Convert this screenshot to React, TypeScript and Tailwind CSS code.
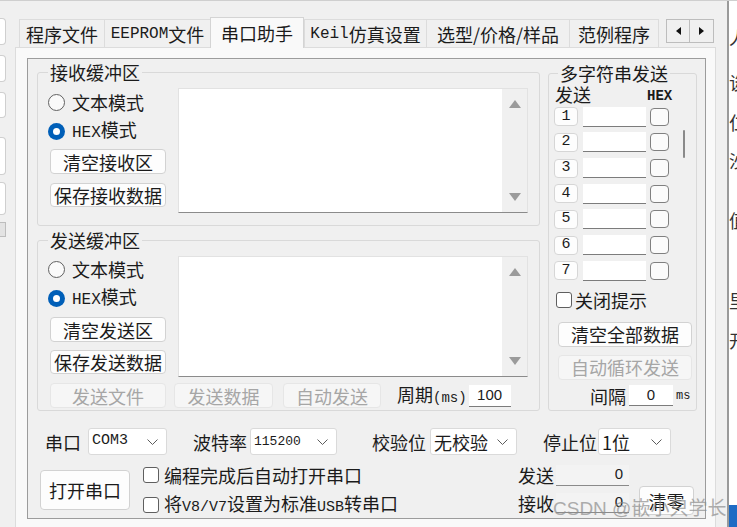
import React from "react";

const CJK = "font-['Noto_Sans_CJK_SC','Noto_Sans',sans-serif]";
const MONO = "font-['Liberation_Mono','DejaVu_Sans_Mono',monospace]";

type P = { className?: string; children?: React.ReactNode };

const Radio = ({ checked, className = "", children }: P & { checked?: boolean }) => (
  <div className={`flex items-center h-[24px] ${className}`}>
    {checked ? (
      <div className="w-[17px] h-[17px] rounded-full bg-[#005fb8] flex items-center justify-center">
        <div className="w-[7px] h-[7px] rounded-full bg-white" />
      </div>
    ) : (
      <div className="w-[17px] h-[17px] rounded-full border border-[#616161] bg-[#fafafa]" />
    )}
    <span className="ml-[7px] text-[18px] leading-[20px]">{children}</span>
  </div>
);

const Btn = ({ disabled, className = "", children }: P & { disabled?: boolean }) => (
  <div
    className={`flex items-center justify-center rounded-[4px] border text-[18px] leading-[20px] ${
      disabled ? "bg-[#f6f6f6] border-[#e6e6e6] text-[#a6a6a6]" : "bg-[#fdfdfd] border-[#d2d2d2] text-[#1b1b1b]"
    } ${className}`}
  >
    {children}
  </div>
);

const TextBox = ({ className = "" }: P) => (
  <div className={`bg-white border border-[#e2e2e2] border-b-[#8b8b8b] flex justify-end ${className}`}>
    <div className="w-[25px] h-full bg-[#f0f0f0] flex flex-col items-center justify-between py-[11px]">
      <svg width="12" height="8" viewBox="0 0 12 8">
        <path d="M6 0 L12 8 L0 8 Z" fill="#9b9b9b" />
      </svg>
      <svg width="12" height="8" viewBox="0 0 12 8">
        <path d="M0 0 L12 0 L6 8 Z" fill="#9b9b9b" />
      </svg>
    </div>
  </div>
);

const Select = ({ className = "", children }: P) => (
  <div className={`bg-white border border-[#dadada] rounded-[3px] flex items-center justify-between pl-[3px] pr-[8px] ${className}`}>
    {children}
    <svg width="11" height="6" viewBox="0 0 11 6">
      <path d="M0.5 0.5 L5.5 5.5 L10.5 0.5" stroke="#5c5c5c" fill="none" strokeWidth="1" />
    </svg>
  </div>
);

const Check = ({ className = "" }: P) => (
  <div className={`rounded-[3px] border border-[#5f5f5f] bg-white shrink-0 ${className}`} />
);

const Tab = ({ w, selected, children }: { w: string; selected?: boolean; children: React.ReactNode }) => (
  <div
    className={`${w} flex items-center justify-center border-t border-l border-r text-[18px] leading-[20px] ${
      selected
        ? "h-[31px] -mb-[1px] relative z-10 bg-[#f9f9f9] border-[#d4d4d4]"
        : "h-[28px] bg-[#f0f0f0] border-[#dcdcdc] -mr-[1px]"
    }`}
  >
    {children}
  </div>
);

const SendRow = ({ n }: { n: number }) => (
  <div className="flex items-center h-[25.67px]">
    <div className={`w-[24px] h-[19px] bg-[#fdfdfd] border border-[#d6d6d6] rounded-[4px] flex items-center justify-center ${MONO} text-[15px] leading-[16px]`}>
      {n}
    </div>
    <div className="ml-[5px] w-[63px] h-[20px] bg-white border-b border-[#7c7c7c]" />
    <div className="ml-[4px] w-[19px] h-[18px] rounded-[4px] border border-[#808080] bg-[#fbfbfb]" />
  </div>
);

export default function App() {
  return (
    <div className={`w-[737px] h-[527px] overflow-hidden bg-[#f0f0f0] flex border-t border-[#cfcfcf] text-[#1b1b1b] relative ${CJK}`}>
      {/* left clipped strip */}
      <div className="w-[15px] shrink-0 flex flex-col">
        <div className="mt-[17px] w-[6px] h-[27px] rounded-r-[4px] border border-l-0 border-[#cfcfcf] bg-white" />
        <div className="mt-[10px] w-[6px] h-[27px] rounded-r-[4px] border border-l-0 border-[#cfcfcf] bg-white" />
        <div className="mt-[10px] w-[6px] h-[26px] rounded-r-[4px] border border-l-0 border-[#cfcfcf] bg-white" />
        <div className="mt-[19px] w-[6px] h-[38px] rounded-r-[4px] border border-l-0 border-[#cfcfcf] bg-white" />
        <div className="mt-[7px] w-[6px] h-[33px] rounded-r-[4px] border border-l-0 border-[#cfcfcf] bg-white" />
        <div className="mt-[7px] w-[6px] h-[15px] border border-l-0 border-[#bdbdbd] bg-[#e3e3e3]" />
      </div>

      {/* main column */}
      <div className="w-[703px] shrink-0 flex flex-col">
        <div className="h-[46px] flex items-end pl-[4px]">
          <Tab w="w-[86px]">程序文件</Tab>
          <Tab w="w-[107px]">
            <span className={`${MONO} text-[16px]`}>EEPROM</span>文件
          </Tab>
          <Tab w="w-[94px]" selected>
            串口助手
          </Tab>
          <Tab w="w-[123px]">
            <span className={`${MONO} text-[16px]`}>Keil</span>仿真设置
          </Tab>
          <Tab w="w-[144px]">选型/价格/样品</Tab>
          <Tab w="w-[90px]">范例程序</Tab>
          <div className="ml-[8px] mb-[4px] flex">
            <div className="w-[24px] h-[24px] border border-[#bdbdbd] bg-[#f0f0f0] flex items-center justify-center">
              <svg width="5" height="8" viewBox="0 0 5 8">
                <path d="M5 0 L0 4 L5 8 Z" fill="#111" />
              </svg>
            </div>
            <div className="w-[24px] h-[24px] border border-l-0 border-[#bdbdbd] bg-[#f0f0f0] flex items-center justify-center">
              <svg width="5" height="8" viewBox="0 0 5 8">
                <path d="M0 0 L5 4 L0 8 Z" fill="#111" />
              </svg>
            </div>
          </div>
        </div>

        {/* panel */}
        <div className="w-[701px] flex-1 bg-[#f9f9f9] border-t border-l border-r border-[#dcdcdc] pt-[10px] pl-[11px]">
          <div className="w-[679px] h-[461px] border border-[#9c9c9c] bg-[#f0f0f0] flex flex-col">
            {/* top section */}
            <div className="flex pl-[9px]">
              <div className="w-[503px] flex flex-col">
                {/* receive */}
                <fieldset className="mt-[3px] h-[164px] border border-[#d9d9d9] rounded-[3px]">
                  <legend className="ml-[10px] px-[2px] text-[18px] leading-[20px]">接收缓冲区</legend>
                  <div className="flex pl-[10px]">
                    <div className="w-[118px] flex flex-col">
                      <Radio className="mt-[8px]">文本模式</Radio>
                      <Radio checked className="mt-[5px]">
                        <span className={`${MONO} text-[16px]`}>HEX</span>模式
                      </Radio>
                      <Btn className="mt-[6px] ml-[2px] w-[116px] h-[25px]">清空接收区</Btn>
                      <Btn className="mt-[9px] ml-[2px] w-[116px] h-[24px]">保存接收数据</Btn>
                    </div>
                    <TextBox className="ml-[12px] mt-[6px] w-[350px] h-[125px]" />
                  </div>
                </fieldset>
                {/* send */}
                <fieldset className="mt-[4px] h-[181px] border border-[#d9d9d9] rounded-[3px]">
                  <legend className="ml-[10px] px-[2px] text-[18px] leading-[20px]">发送缓冲区</legend>
                  <div className="flex flex-col pl-[10px]">
                    <div className="flex">
                      <div className="w-[118px] flex flex-col">
                        <Radio className="mt-[7px]">文本模式</Radio>
                        <Radio checked className="mt-[5px]">
                          <span className={`${MONO} text-[16px]`}>HEX</span>模式
                        </Radio>
                        <Btn className="mt-[7px] ml-[2px] w-[116px] h-[25px]">清空发送区</Btn>
                        <Btn className="mt-[8px] ml-[2px] w-[116px] h-[24px]">保存发送数据</Btn>
                      </div>
                      <TextBox className="ml-[12px] mt-[6px] w-[350px] h-[121px]" />
                    </div>
                    <div className="flex items-center mt-[6px] h-[25px]">
                      <Btn disabled className="ml-[2px] w-[116px] h-[25px]">发送文件</Btn>
                      <Btn disabled className="ml-[8px] w-[99px] h-[25px]">发送数据</Btn>
                      <Btn disabled className="ml-[10px] w-[98px] h-[25px]">自动发送</Btn>
                      <span className="ml-[16px] text-[18px] leading-[20px]">
                        周期<span className={`${MONO} text-[14px]`}>(ms)</span>
                      </span>
                      <div className="ml-[2px] w-[42px] h-[22px] bg-white border-b border-[#7c7c7c] flex items-center justify-center font-['Liberation_Sans',sans-serif] text-[15px]">
                        100
                      </div>
                    </div>
                  </div>
                </fieldset>
              </div>

              {/* multi string send */}
              <fieldset className="ml-[8px] mt-[4px] w-[149px] h-[348px] border border-[#d9d9d9] rounded-[3px]">
                <legend className="ml-[9px] px-[2px] text-[18px] leading-[20px]">多字符串发送</legend>
                <div className="flex items-end h-[20px] mt-[1px] pl-[6px]">
                  <span className="text-[18px] leading-[20px]">发送</span>
                  <span className={`${MONO} ml-[56px] text-[14px] font-bold leading-[16px]`}>HEX</span>
                </div>
                <div className="flex">
                  <div className="pl-[5px] w-[125px] flex flex-col">
                    {[1, 2, 3, 4, 5, 6, 7].map((n) => (
                      <SendRow key={n} n={n} />
                    ))}
                  </div>
                  <div className="w-[20px]">
                    <div className="mt-[26px] ml-[9px] w-[2px] h-[28px] bg-[#8a8a8a] rounded-full" />
                  </div>
                </div>
                <div className="flex items-center mt-[5px] h-[22px] pl-[7px]">
                  <Check className="w-[16px] h-[16px]" />
                  <span className="ml-[3px] text-[18px] leading-[20px]">关闭提示</span>
                </div>
                <Btn className="mt-[11px] ml-[9px] w-[134px] h-[25px]">清空全部数据</Btn>
                <Btn disabled className="mt-[8px] ml-[9px] w-[134px] h-[25px]">自动循环发送</Btn>
                <div className="flex items-center mt-[5px] h-[22px] pl-[41px]">
                  <span className="text-[18px] leading-[20px]">间隔</span>
                  <div className="ml-[3px] w-[44px] h-[21px] bg-white border-b border-[#7c7c7c] flex items-center justify-center font-['Liberation_Sans',sans-serif] text-[15px]">
                    0
                  </div>
                  <span className={`${MONO} ml-[3px] text-[12px]`}>ms</span>
                </div>
              </fieldset>
            </div>

            {/* settings row */}
            <div className="flex items-center mt-[17px] h-[27px] pl-[17px]">
              <span className="text-[18px] leading-[20px]">串口</span>
              <Select className="ml-[7px] w-[79px] h-[27px]">
                <span className={`${MONO} text-[15px]`}>COM3</span>
              </Select>
              <span className="ml-[26px] text-[18px] leading-[20px]">波特率</span>
              <Select className="ml-[3px] w-[87px] h-[27px]">
                <span className={`${MONO} text-[13px]`}>115200</span>
              </Select>
              <span className="ml-[35px] text-[18px] leading-[20px]">校验位</span>
              <Select className="ml-[4px] w-[87px] h-[27px]">
                <span className="text-[18px] leading-[20px]">无校验</span>
              </Select>
              <span className="ml-[26px] text-[18px] leading-[20px]">停止位</span>
              <Select className="ml-[1px] w-[73px] h-[27px]">
                <span className="text-[18px] leading-[20px]">1位</span>
              </Select>
            </div>

            {/* bottom row */}
            <div className="flex mt-[9px] pl-[12px]">
              <Btn className="mt-[6px] w-[90px] h-[40px]">打开串口</Btn>
              <div className="ml-[13px] flex flex-col">
                <div className="flex items-center h-[22px]">
                  <Check className="w-[16px] h-[16px]" />
                  <span className="ml-[5px] text-[18px] leading-[20px]">编程完成后自动打开串口</span>
                </div>
                <div className="flex items-center h-[22px] mt-[8px]">
                  <Check className="w-[16px] h-[16px]" />
                  <span className="ml-[5px] text-[18px] leading-[20px]">
                    将<span className={`${MONO} text-[15px]`}>V8/V7</span>设置为标准
                    <span className={`${MONO} text-[15px]`}>USB</span>转串口
                  </span>
                </div>
              </div>
              <div className="ml-auto mr-[11px] flex">
                <div className="flex flex-col">
                  <div className="flex items-center h-[22px]">
                    <span className="text-[18px] leading-[20px]">发送</span>
                    <div className="ml-[2px] w-[73px] h-[21px] bg-[#f3f3f3] border-b border-[#8a8a8a] flex items-center justify-end pr-[6px] font-['Liberation_Sans',sans-serif] text-[15px]">
                      0
                    </div>
                  </div>
                  <div className="flex items-center h-[21px] mt-[6px]">
                    <span className="text-[18px] leading-[20px]">接收</span>
                    <div className="ml-[2px] w-[73px] h-[20px] bg-[#f3f3f3] border-b border-[#8a8a8a] flex items-center justify-end pr-[6px] font-['Liberation_Sans',sans-serif] text-[15px]">
                      0
                    </div>
                  </div>
                </div>
                <Btn className="ml-[10px] mt-[22px] w-[55px] h-[29px]">清零</Btn>
              </div>
            </div>
          </div>
        </div>
      </div>

      {/* gap + divider + clipped page */}
      <div className="w-[9px] shrink-0" />
      <div className="w-[2px] shrink-0 bg-[#9a9a9a]" />
      <div className="w-[8px] shrink-0 bg-white overflow-hidden flex flex-col text-[18px] leading-[20px] text-[#333]">
        <span className="mt-[26px]">人</span>
        <span className="mt-[25px]">谈</span>
        <span className="mt-[20px]">仁</span>
        <span className="mt-[18px]">沙</span>
        <span className="mt-[40px]">值</span>
        <span className="mt-[60px]">里</span>
        <span className="mt-[20px]">开</span>
        <div className="mt-auto h-[22px] bg-[#1e6bc4]" />
      </div>

      {/* watermark */}
      <div className="absolute left-[553px] top-[495px] text-[19px] leading-[22px] text-[#8d8d8d] opacity-70 whitespace-nowrap pointer-events-none">
        <span className="font-['Liberation_Sans',sans-serif]">CSDN @</span>嵌小只学长
      </div>
    </div>
  );
}
